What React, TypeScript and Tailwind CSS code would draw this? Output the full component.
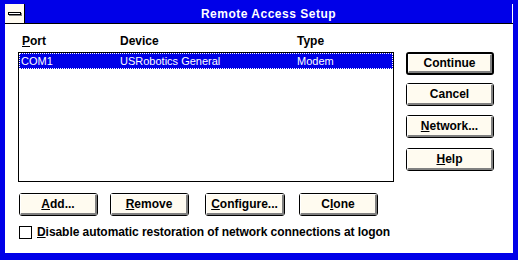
import type { ReactNode } from 'react'

function Btn({
  children,
  isDefault,
  className = '',
}: {
  children: ReactNode
  isDefault?: boolean
  className?: string
}) {
  return (
    <div
      className={`${isDefault ? 'border-2' : 'border'} border-black rounded-[3px] bg-[#fffbf0] h-[23px] ${className}`}
    >
      <div className="h-full border-t border-l border-r-2 border-b-2 border-t-white border-l-white border-r-[#808080] border-b-[#808080] flex items-center justify-center text-[12px] font-bold leading-none text-black">
        {children}
      </div>
    </div>
  )
}

export default function App() {
  return (
    <div className="w-[518px] h-[260px] bg-[#0000e8] flex flex-col pl-[5px] pr-[5px] pt-[4px] pb-[7px] font-['Liberation_Sans',Arial,sans-serif] text-black select-none">
      {/* Title bar */}
      <div className="h-[20px] flex border-b border-black">
        <div className="w-[20px] h-full bg-[#fffbf0] border-r border-black flex items-center justify-center">
          <div className="w-[13px] h-[3px] bg-white border border-black shadow-[1px_1px_0_#808080]" />
        </div>
        <div className="flex-1 flex items-center justify-center text-white text-[12px] font-bold tracking-[0.5px] border-r border-white">
          Remote Access Setup
        </div>
      </div>

      {/* Client area */}
      <div className="flex-1 bg-white flex flex-col">
        <div className="flex pl-[13px]">
          <div className="w-[376px] flex flex-col">
            <div className="h-[28px] flex items-end pb-[4px] pl-[4px] text-[12px] font-bold leading-[14px]">
              <span className="w-[98px]">
                <u className="underline-offset-[1px]">P</u>ort
              </span>
              <span className="w-[177px]">Device</span>
              <span>Type</span>
            </div>
            <div className="h-[130px] border border-black bg-white">
              <div className="h-[16px] bg-[#0000e8] border border-dotted border-white flex items-center pl-[1px] text-white text-[11px] leading-none">
                <span className="w-[99px]">COM1</span>
                <span className="w-[177px]">USRobotics General</span>
                <span>Modem</span>
              </div>
            </div>
          </div>

          <div className="ml-[12px] pt-[28px] flex flex-col w-[88px]">
            <Btn isDefault>Continue</Btn>
            <Btn className="mt-[8px]">Cancel</Btn>
            <Btn className="mt-[9px]">
              <span>
                <u>N</u>etwork...
              </span>
            </Btn>
            <Btn className="mt-[10px]">
              <span>
                <u>H</u>elp
              </span>
            </Btn>
          </div>
        </div>

        <div className="flex pl-[14px] mt-[11px]">
          <Btn className="w-[79px]">
            <span>
              <u>A</u>dd...
            </span>
          </Btn>
          <Btn className="w-[79px] ml-[12px]">
            <span>
              <u>R</u>emove
            </span>
          </Btn>
          <Btn className="w-[80px] ml-[16px]">
            <span>
              <u>C</u>onfigure...
            </span>
          </Btn>
          <Btn className="w-[79px] ml-[14px]">
            <span>
              C<u>l</u>one
            </span>
          </Btn>
        </div>

        <div className="flex items-center pl-[14px] mt-[9px]">
          <div className="w-[13px] h-[13px] border border-black bg-white" />
          <span className="ml-[5px] text-[12px] font-bold leading-[14px] tracking-[-0.06px]">
            <u>D</u>isable automatic restoration of network connections at logon
          </span>
        </div>
      </div>
    </div>
  )
}
